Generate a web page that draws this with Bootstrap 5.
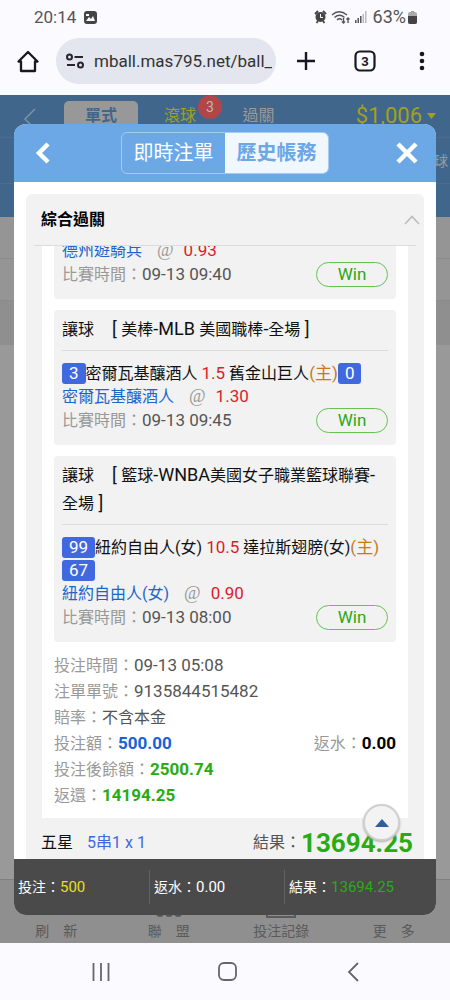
<!DOCTYPE html>
<html lang="zh-Hant">
<head>
<meta charset="utf-8">
<meta name="viewport" content="width=device-width, initial-scale=1">
<title>歷史帳務</title>
<link href="https://cdn.jsdelivr.net/npm/bootstrap@5.3.0/dist/css/bootstrap.min.css" rel="stylesheet">
<style>
  body { font-family: Roboto, "Noto Sans CJK TC", sans-serif; font-size: 16px; line-height: 24px; color: #111; background: #fafaff; }
  svg { display: block; }
  button { font-family: inherit; }
  .plain { border: 0; background: none; padding: 0; display: flex; align-items: center; justify-content: center; }

  /* phone status and browser bar */
  .status { height: 34px; padding: 0 33px 0 34px; color: #555; font-size: 17px; }
  .level { font-size: 18px; margin: 0 2px 0 6px; }
  .chrome { padding: 4px 0 11px; }
  .chrome .plain { width: 56px; flex: none; }
  .chrome .url + .plain { width: 60px; }
  .chrome .url + .plain + .plain { width: 58px; }
  .url { background: #e3e6ef; height: 46px; border-radius: 23px; padding: 0 4px 0 10px; }
  .url input { border: 0; background: none; min-width: 0; font-size: 17px; color: #333; padding: 0; margin-left: 10px; outline: 0; }
  .sysnav { height: 57px; padding: 0 34px 0 38px; }
  .sysnav .plain { height: 57px; }

  /* dimmed page */
  .stage { background: #999; }
  .top-blue { background: #41668c; height: 122px; }
  .top-row { height: 43px; padding: 6px 14px 0 22px; border-bottom: 1px solid #4a6c8e; }
  .sub-row { height: 46px; border-bottom: 1px solid #4a6c8e; color: #999; font-size: 14px; padding-right: 2px; }
  .tab-single { width: 74px; height: 37px; background: #989898; color: #41668c; font-weight: 700; border-radius: 5px 5px 0 0; margin-left: 27px; }
  .tab-single.plain { padding-bottom: 7px; }
  .tab-live { color: #a1a01f; width: 84px; height: 30px; }
  .tab-pass { color: #999; width: 73px; height: 30px; }
  .count { right: 0; top: -6px; width: 24px; height: 24px; border-radius: 12px; background: #b14649; color: #c4b7b7; font-size: 14px; }
  .money { color: #a1a01f; font-size: 22px; height: 30px; gap: 5px; }
  .strip { height: 42px; background: #959595; border-bottom: 1px solid #8b8b8b; }
  .strip-b { height: 44px; background: #8f8f8f; }
  .tabbar { background: #8f8f8f; border-top: 1px solid #7f7f7f; padding: 9px 0 0; }
  .tabbar a { color: #5a5a5a; font-size: 14px; line-height: 24px; text-decoration: none; }

  /* dialog */
  .dlg { inset: 29px 14px 28px; border-radius: 12px; background: #fff; }
  .dlg-head { background: #6ba8e5; height: 58px; padding: 0 15px; }
  .dlg-head > .plain { width: 28px; height: 40px; }
  .seg { border: 1px solid #a5cbf0; border-radius: 6px; }
  .seg button { width: 103px; height: 40px; font-size: 20px; color: #fff; }
  .seg button.on { background: #f0f7ff; color: #6ba8e5; font-weight: 700; }
  .dlg-body { padding: 12px 12px 0; min-height: 0; }
  .panel { background: #f2f2f2; border-radius: 6px 6px 0 0; min-height: 0; }
  .panel-head { height: 52px; margin: 0 8px; padding: 0 0 0 7px; border-bottom: 1px solid #dcdcdc; flex: none; }
  .panel-head h1 { font-size: 16px; font-weight: 700; color: #000; margin: 0; }
  .panel-head button { margin-right: -4px; }
  .scroller { min-height: 0; justify-content: flex-end; }
  .slip { background: #fff; margin: 0 16px; padding: 0 12px 10px; }
  .bet { background: #f2f2f2; border-radius: 4px; padding: 0 8px 13px; margin-bottom: 11px; }
  .bet h2 { font-size: 16px; line-height: 28px; font-weight: 400; margin: 0 0 11px; padding: 6px 0; border-bottom: 1px solid #dcdcdc; }
  .bet h2 span { margin-left: 18px; }
  .bet h2 b { font-weight: 400; font-size: 18px; line-height: 20px; }
  .teams { line-height: 23px; margin-right: -4px; }
  .pick { line-height: 24px; height: 24px; color: #1a66cc; white-space: pre; }
  .time { height: 23px; }
  .score, .odds, .host, .val, .win, .meta strong { font-size: 17px; line-height: 20px; }
  .score { display: inline-block; vertical-align: top; margin-top: 1px; background: #4169df; color: #fff; border-radius: 3px; line-height: 21px; padding: 0 7px; }
  .win { width: 72px; height: 25px; border: 1px solid #67c254; border-radius: 13px; color: #2ba816; line-height: 23px; }
  .meta .cjk, .outcome .cjk { font-size: 16px; line-height: inherit; }
  .odds { color: #dc1c28; }
  .host { color: #c57a1d; }
  .at { font-family: "Liberation Serif", serif; color: #999; font-size: 18px; line-height: 20px; margin: 0 10px 0 15px; }
  .lab { color: #999; }
  .val { color: #555; }
  .grn { color: #29ab13; }
  .meta { line-height: 26px; margin-bottom: -1px; }
  .meta > div { height: 26px; }
  .outcome { padding: 9px 11px 0 15px; line-height: 32px; }
  .outcome strong { font-size: 26px; }
  .combo { color: #4169df; margin-left: 14px; }
  .foot { background: #4a4a4a; color: #fff; display: grid; grid-template-columns: 32% 32% 36%; height: 56px; font-size: 14px; flex: none; }
  .foot div { margin: 11px 0; padding-left: 4px; border-left: 1px solid #626262; }
  .foot div:first-child { border: 0; }
  .foot b { font-weight: 400; font-size: 15px; }
  .blu { color: #1661dc; }
  .yel { color: #e8e010; }
  .up { right: 50px; bottom: 102px; width: 37px; height: 37px; }
  .up.plain { border-radius: 19px; border: 2px solid #d0d0d0; background: #f3f3f3; box-shadow: 0 1px 2px #aaa; }
  .up, .count, .dlg { position: absolute; }
</style>
</head>
<body class="d-flex flex-column vh-100 overflow-hidden">

<header>
  <div class="status d-flex align-items-center">
    <span>20:14</span>
    <svg class="ms-2" width="13" height="13" viewBox="0 0 13 13"><rect width="13" height="13" rx="3" fill="#444"/><path d="M2 10l3-4 2 2 2-3 2 5z" fill="#fafaff"/><path d="M2 3h3v2H2z" fill="#fafaff"/></svg>
    <div class="d-flex align-items-center ms-auto">
      <svg width="13" height="14" viewBox="0 0 13 14"><circle cx="6.500" cy="7" r="5" fill="#444"/><path d="M1 4l3-3M12 4L9 1M2.500 13l1.500-2M10.500 13L9 11" stroke="#444" stroke-width="1.800"/><path d="M6.500 4v3.500h2.500" stroke="#fafaff" fill="none"/></svg>
      <svg class="ms-1" width="20" height="14" viewBox="0 0 20 14" fill="none" stroke="#555" stroke-width="1.400"><path d="M1 5q7-6.500 15 0M3.500 7.500q5-4.500 10 0M6 10q2.500-2.500 5 0M12.500 8v5M11 11.500l1.500 1.500 1.500-1.500M17 13V8M15.500 9.500L17 8l1.500 1.500"/></svg>
      <svg class="ms-1" width="12" height="12" viewBox="0 0 12 12"><path d="M0 9h1.500v3H0zM2.500 7H4v5H2.500zM5 5h1.500v7H5z" fill="#555"/><path d="M7.500 3H9v9H7.500zM10 0h1.500v12H10z" fill="#bbb"/></svg>
      <span class="level">63%</span>
      <svg width="9" height="13" viewBox="0 0 9 13"><path d="M3 0h3v1H3z" fill="#999"/><rect y="1" width="9" height="12" rx="2" fill="#aaa"/><path d="M0 5h9v6a2 2 0 0 1-2 2H2a2 2 0 0 1-2-2z" fill="#444"/></svg>
    </div>
  </div>
  <div class="chrome d-flex align-items-center">
    <button class="plain" aria-label="首頁"><svg width="22" height="23" viewBox="0 0 22 23"><path d="M1.500 11.500L11 2l9.500 9.500H18V21H4v-9.500z" fill="none" stroke="#181820" stroke-width="2.300" stroke-linejoin="round"/></svg></button>
    <div class="url d-flex align-items-center flex-grow-1">
      <svg class="flex-shrink-0" width="18" height="16" viewBox="0 0 18 16" fill="none" stroke="#26262e" stroke-width="2"><circle cx="3.500" cy="4" r="2.500"/><path d="M8.500 4H17M1 12h8"/><circle cx="14.500" cy="12" r="2.500"/></svg>
      <input class="w-100" type="text" aria-label="網址" value="mball.mas795.net/ball_">
    </div>
    <button class="plain" aria-label="新增分頁"><svg width="20" height="20" viewBox="0 0 20 20"><path d="M10 1v18M1 10h18" stroke="#181820" stroke-width="2.400"/></svg></button>
    <button class="plain" aria-label="分頁"><svg width="22" height="22" viewBox="0 0 22 22"><rect x="1.500" y="1.500" width="19" height="19" rx="4.500" fill="none" stroke="#181820" stroke-width="2.200"/><text x="11" y="15.500" text-anchor="middle" font-size="13" font-weight="700" fill="#181820">3</text></svg></button>
    <button class="plain" aria-label="選單"><svg width="6" height="20" viewBox="0 0 6 20" fill="#181820"><circle cx="3" cy="3" r="2.300"/><circle cx="3" cy="10" r="2.300"/><circle cx="3" cy="17" r="2.300"/></svg></button>
  </div>
</header>

<main class="stage flex-grow-1 position-relative d-flex flex-column overflow-hidden">
  <div class="top-blue">
    <div class="top-row d-flex">
      <button class="plain" aria-label="返回"><svg width="15" height="22" viewBox="0 0 15 22"><path d="M13 1L3 11l10 10" fill="none" stroke="#7c93a8" stroke-width="1.500"/></svg></button>
      <button class="plain tab-single">單式</button>
      <button class="plain tab-live position-relative">滾球<span class="count d-flex align-items-center justify-content-center">3</span></button>
      <button class="plain tab-pass">過關</button>
      <div class="money d-flex align-items-center ms-auto">$1,006<svg width="9" height="6" viewBox="0 0 9 6"><path d="M0 0h9L4.500 6z" fill="#a1a01f"/></svg></div>
    </div>
    <div class="sub-row d-flex align-items-center justify-content-end">球</div>
  </div>
  <div class="strip"></div>
  <div class="strip"></div>
  <div class="strip-b"></div>
  <nav class="tabbar row row-cols-4 g-0 text-center mt-auto">
    <a class="col" href="#"><svg class="mx-auto" width="30" height="30" viewBox="0 0 30 30"><path d="M22 8a9 9 0 1 0 1 8M23 3v6h-6" fill="none" stroke="#5a5a5a" stroke-width="2"/></svg>刷　新</a>
    <a class="col" href="#"><svg class="mx-auto" width="30" height="30" viewBox="0 0 30 30" fill="none" stroke="#5a5a5a" stroke-width="2"><path d="M15 3v13M5 22v-6h20v6"/><circle cx="6" cy="24" r="3"/><circle cx="15" cy="24" r="3"/><circle cx="24" cy="24" r="3"/></svg>聯　盟</a>
    <a class="col" href="#"><svg class="mx-auto" width="30" height="30" viewBox="0 0 30 30"><path d="M1 3h28v25H1zM7 10h16M7 16h16" fill="none" stroke="#5a5a5a" stroke-width="2"/></svg>投注記錄</a>
    <a class="col" href="#"><svg class="mx-auto" width="30" height="30" viewBox="0 0 30 30" fill="#5a5a5a"><circle cx="6" cy="14" r="2"/><circle cx="15" cy="14" r="2"/><circle cx="24" cy="14" r="2"/></svg>更　多</a>
  </nav>

  <section class="dlg d-flex flex-column overflow-hidden" role="dialog" aria-label="歷史帳務">
    <div class="dlg-head d-flex align-items-center justify-content-between flex-shrink-0">
      <button class="plain" aria-label="返回"><svg width="14" height="22" viewBox="0 0 14 22"><path d="M12 2L3 11l9 9" fill="none" stroke="#fff" stroke-width="4.500"/></svg></button>
      <div class="seg d-flex overflow-hidden">
        <button class="plain">即時注單</button>
        <button class="plain on">歷史帳務</button>
      </div>
      <button class="plain" aria-label="關閉"><svg width="22" height="22" viewBox="0 0 22 22"><path d="M2 2l18 18M20 2L2 20" stroke="#fff" stroke-width="4.500"/></svg></button>
    </div>

    <div class="dlg-body d-flex flex-column flex-grow-1">
      <div class="panel d-flex flex-column flex-grow-1">
        <div class="panel-head d-flex align-items-center justify-content-between">
          <h1>綜合過關</h1>
          <button class="plain" aria-label="收合"><svg width="16" height="10" viewBox="0 0 16 10"><path d="M1 9l7-7.500L15 9" fill="none" stroke="#bbb" stroke-width="1.600"/></svg></button>
        </div>
        <div class="scroller d-flex flex-column flex-grow-1 overflow-hidden">
          <div class="slip">
            <article class="bet">
              <div class="pick">德州遊騎兵<span class="at">@</span><span class="odds">0.93</span></div>
              <div class="time d-flex align-items-center justify-content-between"><span><span class="lab">比賽時間：</span><span class="val">09-13 09:40</span></span><span class="win text-center">Win</span></div>
            </article>
            <article class="bet">
              <h2>讓球<span><b>[ </b>美棒<b>-MLB </b>美國職棒<b>-</b>全場<b> ]</b></span></h2>
              <div class="teams"><span class="score">3</span>密爾瓦基釀酒人 <span class="odds">1.5</span> 舊金山巨人<span class="host">(主)</span><span class="score">0</span></div>
              <div class="pick">密爾瓦基釀酒人<span class="at">@</span><span class="odds">1.30</span></div>
              <div class="time d-flex align-items-center justify-content-between"><span><span class="lab">比賽時間：</span><span class="val">09-13 09:45</span></span><span class="win text-center">Win</span></div>
            </article>
            <article class="bet">
              <h2>讓球<span><b>[ </b>籃球<b>-WNBA</b>美國女子職業籃球聯賽<b>-</b><wbr><i class="text-nowrap fst-normal">全場<b> ]</b></i></span></h2>
              <div class="teams"><span class="score">99</span>紐約自由人(女) <span class="odds">10.5</span> 達拉斯翅膀(女)<span class="host">(主)</span> <span class="score">67</span></div>
              <div class="pick">紐約自由人(女)<span class="at">@</span><span class="odds">0.90</span></div>
              <div class="time d-flex align-items-center justify-content-between"><span><span class="lab">比賽時間：</span><span class="val">09-13 08:00</span></span><span class="win text-center">Win</span></div>
            </article>
            <div class="meta">
              <div><span class="lab">投注時間：</span><span class="val">09-13 05:08</span></div>
              <div><span class="lab">注單單號：</span><span class="val">9135844515482</span></div>
              <div><span class="lab">賠率：</span><span class="val cjk">不含本金</span></div>
              <div class="d-flex justify-content-between"><span><span class="lab">投注額：</span><strong class="blu">500.00</strong></span><span><span class="lab">返水：</span><strong class="text-black">0.00</strong></span></div>
              <div><span class="lab">投注後餘額：</span><strong class="grn">2500.74</strong></div>
              <div><span class="lab">返還：</span><strong class="grn">14194.25</strong></div>
            </div>
          </div>
          <div class="outcome d-flex justify-content-between">
            <span>五星<span class="combo">5串1 x 1</span></span>
            <span class="d-flex"><span class="val cjk">結果：</span><strong class="grn">13694.25</strong></span>
          </div>
        </div>
      </div>
    </div>

    <div class="foot">
      <div class="d-flex align-items-center">投注：<b class="yel">500</b></div>
      <div class="d-flex align-items-center">返水：<b>0.00</b></div>
      <div class="d-flex align-items-center">結果：<b class="grn">13694.25</b></div>
    </div>
  </section>
  <button class="plain up" aria-label="回到頂端"><svg width="14" height="8" viewBox="0 0 14 8"><path d="M0 8l7-8 7 8z" fill="#2f5f9e"/></svg></button>
</main>

<nav class="sysnav row row-cols-3 g-0">
  <button class="plain col" aria-label="最近"><svg width="18" height="18" viewBox="0 0 18 18"><path d="M1.500 0v18M9 0v18M16.500 0v18" stroke="#666" stroke-width="1.800"/></svg></button>
  <button class="plain col" aria-label="主畫面"><svg width="19" height="19" viewBox="0 0 19 19"><rect x="1" y="1" width="17" height="17" rx="5" fill="none" stroke="#666" stroke-width="1.800"/></svg></button>
  <button class="plain col" aria-label="返回"><svg width="12" height="20" viewBox="0 0 12 20"><path d="M11 1L2 10l9 9" fill="none" stroke="#666" stroke-width="1.800"/></svg></button>
</nav>

<script src="https://cdn.jsdelivr.net/npm/bootstrap@5.3.0/dist/js/bootstrap.bundle.min.js"></script>
</body>
</html>
